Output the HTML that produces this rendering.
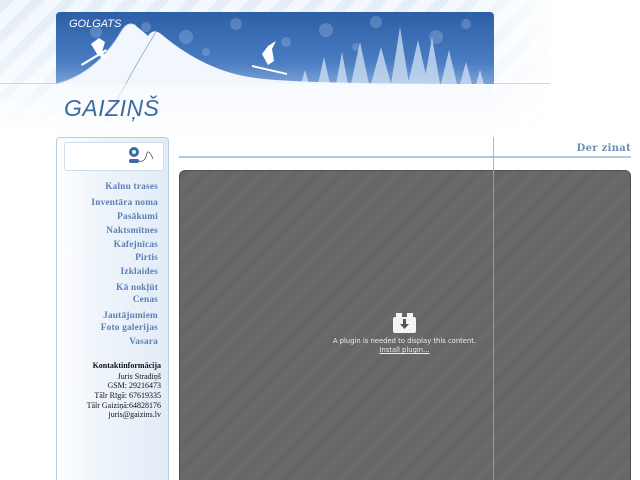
<!DOCTYPE html>
<html><head><meta charset="utf-8">
<style>
html,body{margin:0;padding:0;width:640px;height:480px;overflow:hidden;background:#fff;position:relative;font-family:"Liberation Serif",serif}
.stripes{position:absolute;left:0;top:0;width:550px;height:135px;
background:repeating-linear-gradient(135deg,#e4eef9 0 10px,#f4f8fd 10px 22px);}
.fade{position:absolute;left:0;top:0;width:550px;height:135px;
background:linear-gradient(180deg,rgba(255,255,255,0) 0,rgba(255,255,255,.2) 40%,#fff 100%)}
.fade2{position:absolute;left:0;top:0;width:560px;height:135px;background:linear-gradient(90deg,rgba(255,255,255,0) 80%,#fff 100%)}
.hline{position:absolute;left:0;top:83px;width:550px;height:1px;background:#c8d8e8}
.banner{position:absolute;left:56px;top:12px;width:438px;height:125px;border-radius:4px 4px 0 0;overflow:hidden;
background:linear-gradient(180deg,#2d5fa6 0,#4a7cc2 40%,#8fb2e0 65%,#ffffff 100%)}
.menu div{position:absolute;right:482px;font-weight:bold;font-size:9.3px;color:#5b80b4;white-space:nowrap;letter-spacing:.2px}
.contact div{position:absolute;right:479px;font-size:8px;color:#111;white-space:nowrap}
</style></head><body>
<div class="stripes"></div><div class="fade"></div><div class="fade2"></div>
<div class="hline"></div>
<div class="banner">
<svg width="438" height="125" viewBox="0 0 438 125" style="position:absolute;left:0;top:0">
<g fill="#a9c4e8" opacity=".3">
<circle cx="40" cy="20" r="6"/><circle cx="90" cy="15" r="5"/><circle cx="130" cy="25" r="7"/><circle cx="180" cy="12" r="6"/><circle cx="230" cy="30" r="5"/><circle cx="270" cy="18" r="7"/><circle cx="320" cy="10" r="6"/><circle cx="380" cy="25" r="7"/><circle cx="410" cy="12" r="5"/><circle cx="300" cy="35" r="4"/><circle cx="150" cy="40" r="4"/>
</g>
<g fill="#d2e2f5" opacity=".75">
<polygon points="262,72 268,45 274,72"/><polygon points="280,72 286,40 292,72"/><polygon points="295,72 304,30 313,72"/><polygon points="315,72 325,35 335,72"/><polygon points="335,72 344,15 353,72"/><polygon points="352,72 362,28 372,72"/><polygon points="368,72 376,25 384,72"/><polygon points="385,72 393,38 401,72"/><polygon points="404,72 410,50 416,72"/><polygon points="420,72 424,58 428,72"/><polygon points="245,72 249,58 253,72"/>
</g>
<path d="M0 72 Q40 62 65 20 Q72 8 80 14 Q88 20 92 24 Q97 16 105 22 Q150 60 200 66 Q240 72 438 72 L438 125 L0 125Z" fill="#f2f7fd"/>
<path d="M0 72 Q40 62 65 20 Q72 8 80 14" fill="none" stroke="#cfe0f3"/>
<path d="M50 110 Q75 60 100 20" fill="none" stroke="#8fb0d8" stroke-width=".8"/>
<g fill="#fff"><path d="M35 32 l8 -6 l6 4 l-3 10 l6 6 l-3 2 l-8 -6z"/><path d="M25 52 l25 -15 l1 2 l-25 15z"/>
<path d="M206 42 l6 -8 l8 -5 l-4 8 l2 12 l-6 4z"/><path d="M196 53 l35 8 l0 2 l-35 -8z"/></g>
<text x="13" y="15" font-family="Liberation Sans,sans-serif" font-style="italic" font-size="11" fill="#fff">GOLGATS</text>
</svg>
</div>
<div style="position:absolute;left:56px;top:84px;width:438px;height:55px;background:linear-gradient(180deg,rgba(255,255,255,.4),#fff)"></div>
<div style="position:absolute;left:64px;top:95px;font-family:'Liberation Sans',sans-serif;font-style:italic;font-size:23px;color:#3d6aa3;letter-spacing:.5px">GAIZIŅŠ</div>
<div style="position:absolute;left:56px;top:137px;width:111px;height:343px;border:1px solid #b8cde3;border-bottom:0;border-radius:4px 4px 0 0;background:linear-gradient(90deg,#fff 0,#eef4fb 40%,#e2ecf7 100%)"></div>
<div style="position:absolute;left:64px;top:142px;width:98px;height:27px;border:1px solid #cfdcea;border-radius:3px;background:#fff"></div>
<svg width="30" height="22" style="position:absolute;left:125px;top:145px" viewBox="0 0 30 22"><circle cx="9" cy="7" r="5" fill="#3e6aa0"/><circle cx="9" cy="7" r="2" fill="#cfe"/><rect x="4" y="14" width="10" height="4" rx="2" fill="#3e6aa0"/><path d="M14 16 Q20 18 22 8 Q24 4 28 14" fill="none" stroke="#555" stroke-width=".8"/></svg>
<div class="menu">
<div style="top:182px">Kalnu trases</div><div style="top:198px">Inventāra noma</div><div style="top:212px">Pasākumi</div><div style="top:226px">Naktsmītnes</div><div style="top:240px">Kafejnīcas</div><div style="top:253px">Pirtis</div><div style="top:267px">Izklaides</div><div style="top:283px">Kā nokļūt</div><div style="top:295px">Cenas</div><div style="top:311px">Jautājumiem</div><div style="top:323px">Foto galerijas</div><div style="top:337px">Vasara</div>
</div>
<div class="contact">
<div style="top:361px;font-weight:bold">Kontaktinformācija</div><div style="top:372px">Juris Stradiņš</div><div style="top:381px">GSM: 29216473</div><div style="top:391px">Tālr Rīgā: 67619335</div><div style="top:401px">Tālr Gaiziņā:64828176</div><div style="top:410px">juris@gaizins.lv</div>
</div>
<div style="position:absolute;left:179px;top:156px;width:452px;height:2px;background:#b4c8dc"></div>
<div style="position:absolute;right:9px;top:143px;font-weight:bold;font-size:10px;color:#6b8db8;font-family:'DejaVu Serif',serif;letter-spacing:.3px">Der zinat</div>
<div style="position:absolute;left:179px;top:170px;width:450px;height:320px;border:1px solid #505050;border-radius:6px;
background:repeating-linear-gradient(135deg,#666 0 8px,#6a6a6a 8px 16px)"></div>
<div style="position:absolute;left:493px;top:137px;width:1px;height:343px;background:#8ea9c4;opacity:.8"></div>
<svg width="24" height="20" style="position:absolute;left:393px;top:313px" viewBox="0 0 24 20"><rect x="0" y="4" width="23" height="16" rx="2" fill="#f4f4f4"/><rect x="3" y="0" width="6" height="6" fill="#f4f4f4"/><rect x="14" y="0" width="6" height="6" fill="#f4f4f4"/><path d="M10 6 h3 v5 h3 l-4.5 5 l-4.5 -5 h3z" fill="#555"/></svg>
<div style="position:absolute;left:300px;top:337px;width:209px;text-align:center;font-family:'DejaVu Sans',sans-serif;font-size:6.8px;color:#eee">A plugin is needed to display this content.</div>
<div style="position:absolute;left:300px;top:346px;width:209px;text-align:center;font-family:'DejaVu Sans',sans-serif;font-size:6.8px;color:#eee;text-decoration:underline">Install plugin...</div>
</body></html>
